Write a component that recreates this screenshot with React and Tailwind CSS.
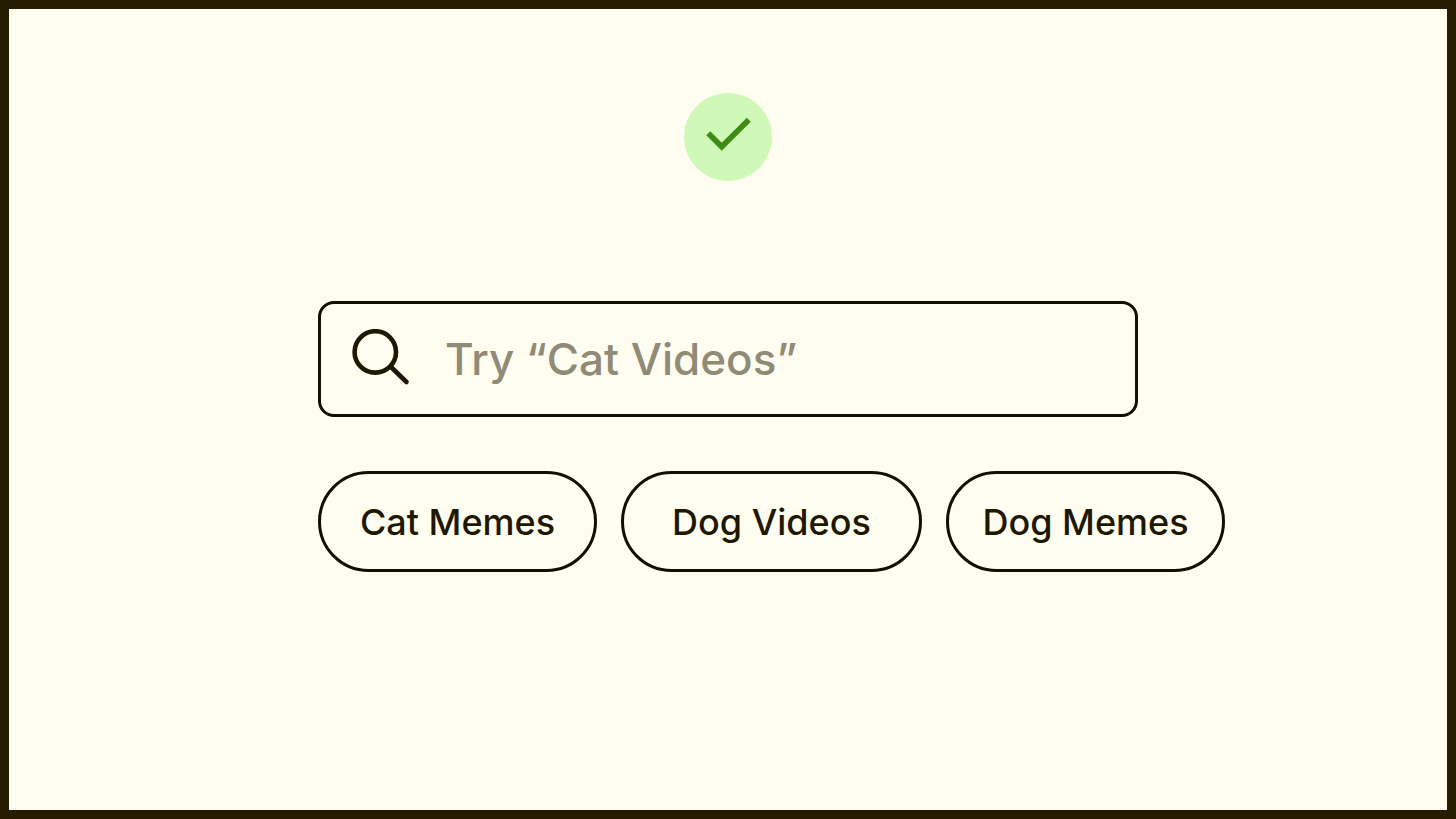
import React, { useState } from "react";

const suggestions = [
  { label: "Cat Memes", width: "w-[279px]" },
  { label: "Dog Videos", width: "w-[301px]" },
  { label: "Dog Memes", width: "w-[279px]" },
];

export default function App() {
  const [query, setQuery] = useState("");

  return (
    <main className="min-h-screen border-9 border-[#241b00] bg-[#fffdf0] px-6 pt-[84px] font-['Inter',sans-serif] font-medium text-[#1f1800]">
      <StatusBadge />

      <div className="mx-auto mt-[120px] w-full max-w-[820px]">
        {/* Search box */}
        <form role="search" onSubmit={(e) => e.preventDefault()}>
          <label className="flex h-[116px] items-center rounded-2xl border-3 border-[#120e00] pl-[30px] pr-8">
            <SearchIcon />
            <input
              type="text"
              aria-label="Search"
              value={query}
              onChange={(e) => setQuery(e.target.value)}
              placeholder="Try “Cat Videos”"
              className="ml-[34px] h-16 min-w-0 flex-1 bg-transparent text-[44px] outline-none placeholder:text-[#8f8b76]"
            />
          </label>
        </form>

        {/* Suggestions, the row runs past the end of the search box */}
        <div className="mt-[54px] flex gap-6">
          {suggestions.map((s) => (
            <button
              key={s.label}
              type="button"
              onClick={() => setQuery(s.label)}
              className={`h-[101px] shrink-0 rounded-full border-3 border-[#120e00] text-4xl ${s.width}`}
            >
              {s.label}
            </button>
          ))}
        </div>
      </div>
    </main>
  );
}

function StatusBadge() {
  return (
    <div className="mx-auto size-[88px] rounded-full bg-[#cff8b9]">
      <svg viewBox="0 0 88 88" fill="none" className="size-full" aria-hidden="true">
        <path d="M24.3 40.3 37.7 53.7 64.8 26.8" stroke="#3f8c14" strokeWidth="5.6" />
      </svg>
    </div>
  );
}

function SearchIcon() {
  return (
    <svg
      viewBox="0 0 60 60"
      fill="none"
      stroke="#1f1800"
      strokeWidth="4.6"
      strokeLinecap="round"
      className="size-[60px] shrink-0"
      aria-hidden="true"
    >
      <circle cx="24.3" cy="22.9" r="20.7" />
      <path d="M39.5 37.5 55.5 53" />
    </svg>
  );
}
